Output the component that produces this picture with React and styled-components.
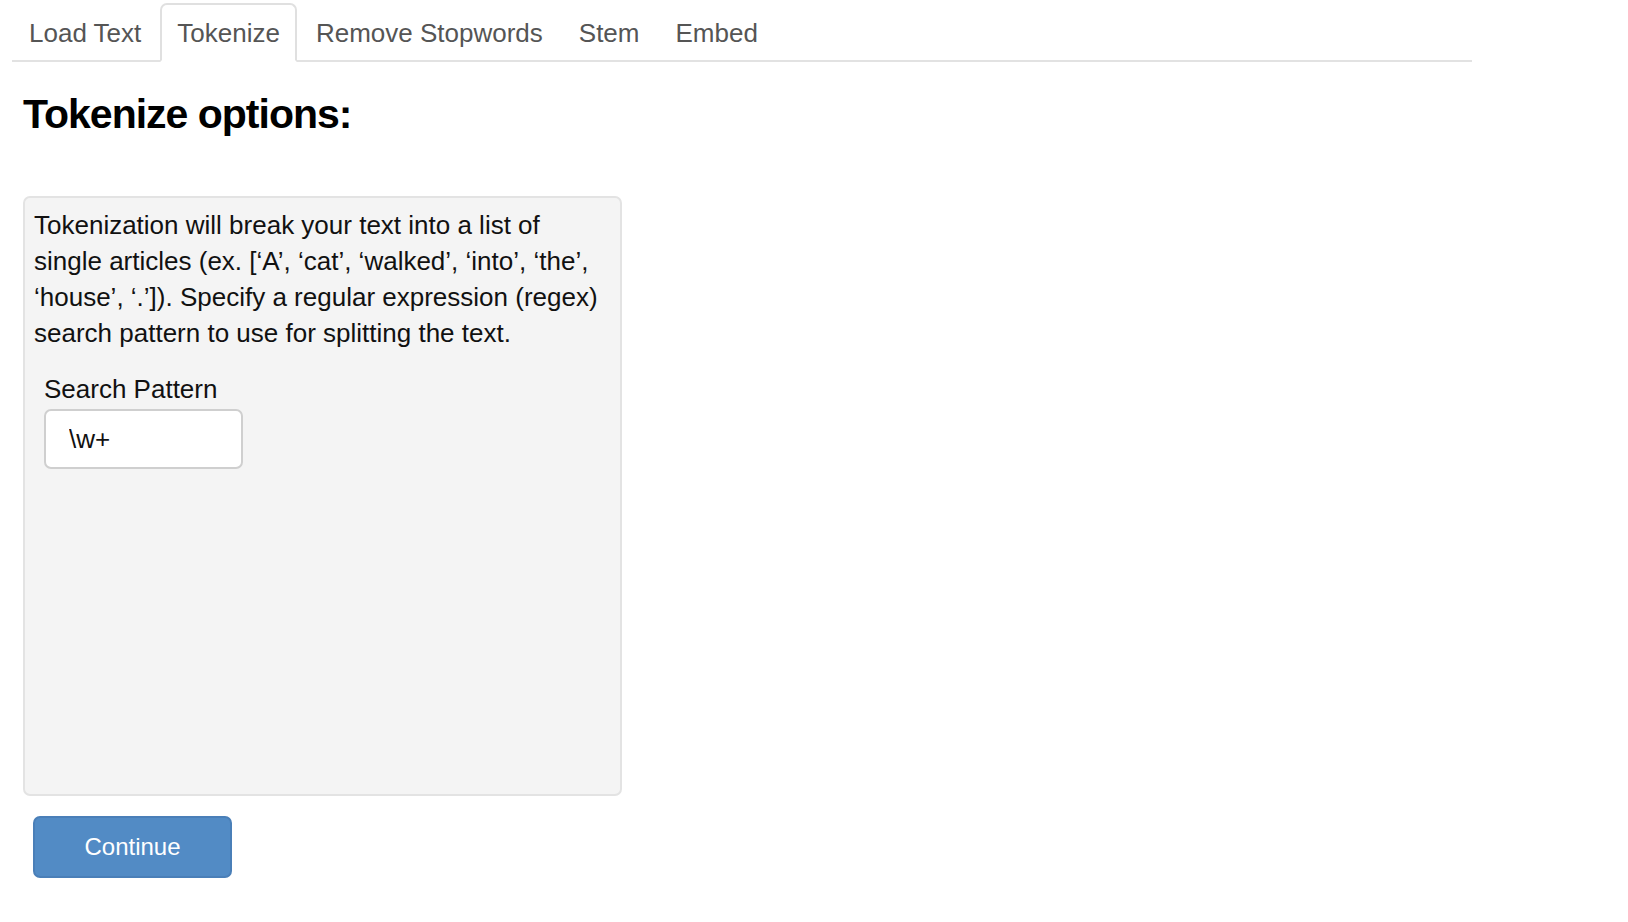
import React, { useState } from 'react';
import styled, { createGlobalStyle } from 'styled-components';

const GlobalStyle = createGlobalStyle`
    body {
        margin: 0;
        background: #fff;
        font-family: "Liberation Sans", Helvetica, Arial, sans-serif;
        font-size: 26px;
        line-height: 36px;
        color: #111;
    }
`;

const Page = styled.div`
    padding-left: 12px;
`;

const TabList = styled.ul`
    display: flex;
    width: 1460px;
    margin: 0;
    padding: 3px 0 0;
    list-style: none;
    border-bottom: 2px solid #e2e2e2;
`;

const TabItem = styled.li`
    margin: 0 2px -2px 0;
`;

const TabLink = styled.a`
    display: block;
    padding: 10px 15px 9px;
    line-height: 36px;
    color: #555;
    text-decoration: none;
    cursor: pointer;
    border: 2px solid ${p => (p.$active ? '#e0e0e0' : 'transparent')};
    border-bottom-color: ${p => (p.$active ? '#fff' : 'transparent')};
    border-radius: 7px 7px 0 0;
    background: ${p => (p.$active ? '#fff' : 'transparent')};
`;

const Content = styled.div`
    padding-left: 11px;
`;

const Heading = styled.h3`
    margin: 28px 0 58px;
    font-size: 41px;
    line-height: 48px;
    font-weight: bold;
    letter-spacing: -1px;
    color: #000;
`;

const Well = styled.div`
    box-sizing: border-box;
    width: 599px;
    height: 600px;
    padding: 9px 12px 9px 9px;
    background: #f4f4f4;
    border: 2px solid #e3e3e3;
    border-radius: 7px;
`;

const Intro = styled.p`
    margin: 0 0 20px;
`;

const FormGroup = styled.div`
    margin-left: 10px;
`;

const Label = styled.label`
    display: block;
    margin-bottom: 2px;
`;

const TextInput = styled.input`
    box-sizing: border-box;
    width: 199px;
    height: 60px;
    padding: 0 23px;
    font-family: inherit;
    font-size: 26px;
    color: #111;
    background: #fff;
    border: 2px solid #cfcfcf;
    border-radius: 7px;
    outline: none;
`;

const Button = styled.button`
    display: block;
    box-sizing: border-box;
    width: 199px;
    height: 62px;
    margin: 20px 0 0 10px;
    font-family: inherit;
    font-size: 24px;
    color: #fff;
    background: #528bc5;
    border: 2px solid #4a7fb8;
    border-radius: 7px;
    cursor: pointer;
`;

const tabs = ['Load Text', 'Tokenize', 'Remove Stopwords', 'Stem', 'Embed'];

export default function App() {
    const [active, setActive] = useState('Tokenize');
    const [pattern, setPattern] = useState('\\w+');

    return (
        <Page>
            <GlobalStyle />
            <TabList>
                {tabs.map(t => (
                    <TabItem key={t}>
                        <TabLink $active={t === active} onClick={() => setActive(t)}>{t}</TabLink>
                    </TabItem>
                ))}
            </TabList>
            <Content>
                <Heading>Tokenize options:</Heading>
                <Well>
                    <Intro>
                        Tokenization will break your text into a list of single articles (ex. [‘A’, ‘cat’, ‘walked’, ‘into’, ‘the’, ‘house’, ‘.’]). Specify a regular expression (regex) search pattern to use for splitting the text.
                    </Intro>
                    <FormGroup>
                        <Label htmlFor="pattern">Search Pattern</Label>
                        <TextInput id="pattern" value={pattern} onChange={e => setPattern(e.target.value)} />
                    </FormGroup>
                </Well>
                <Button>Continue</Button>
            </Content>
        </Page>
    );
}
